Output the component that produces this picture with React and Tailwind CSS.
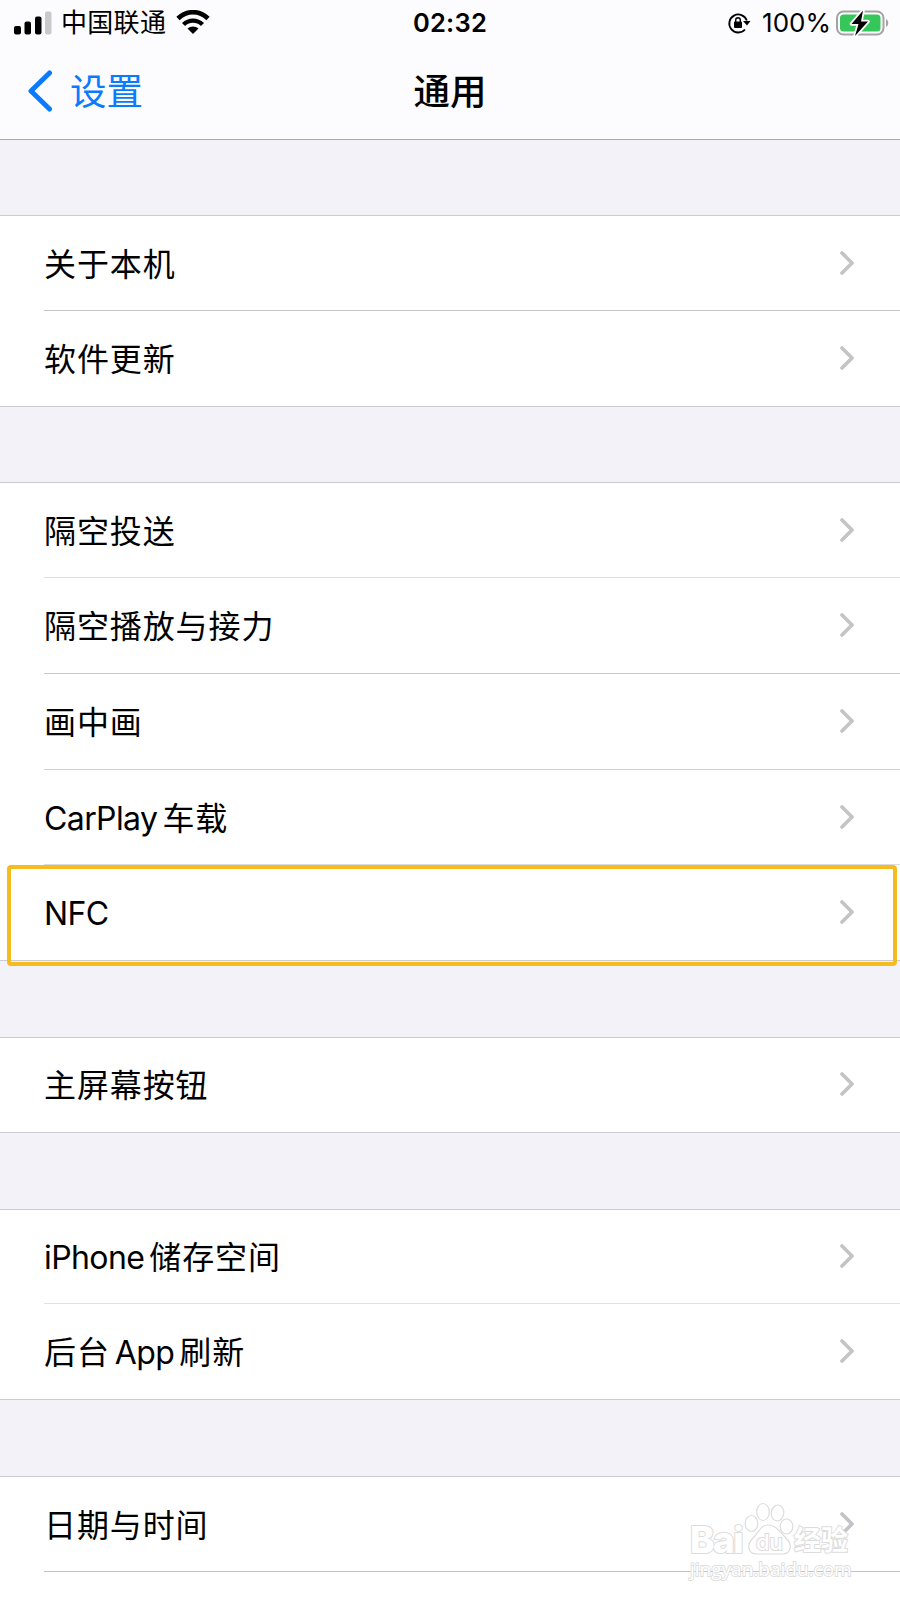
const groups = [
  {
    margin: "mt-[75px]",
    items: [
      { label: "关于本机", height: "h-[95px]", line: "bg-[#c4c4c8]" },
      { label: "软件更新", height: "h-[95px]" },
    ],
  },
  {
    margin: "mt-[75px]",
    items: [
      { label: "隔空投送", height: "h-[95px]", line: "bg-[#dedee0]" },
      { label: "隔空播放与接力", height: "h-[96px]", line: "bg-[#cacacd]" },
      { label: "画中画", height: "h-[96px]", line: "bg-[#d2d2d5]" },
      { label: "CarPlay 车载", height: "h-[95px]", line: "bg-[#dcdcde]" },
      { label: "NFC", height: "h-[95px]", selected: true },
    ],
  },
  {
    margin: "mt-[76px]",
    items: [{ label: "主屏幕按钮", height: "h-[94px]" }],
  },
  {
    margin: "mt-[76px]",
    items: [
      { label: "iPhone 储存空间", height: "h-[94px]", line: "bg-[#e2e2e4]" },
      { label: "后台 App 刷新", height: "h-[95px]" },
    ],
  },
  {
    margin: "mt-[76px]",
    items: [
      { label: "日期与时间", height: "h-[95px]", line: "bg-[#c4c4c8]" },
    ],
    last: true,
  },
];

function Signal() {
  return (
    <svg className="h-6 w-[38px]" viewBox="0 0 38 24">
      <rect x="0" y="15" width="7" height="8.5" rx="2" />
      <rect x="10.5" y="10.5" width="6.5" height="13" rx="2" />
      <rect x="21" y="5.5" width="6.5" height="18" rx="2" />
      <rect x="31" y="0.5" width="6.5" height="23" rx="2" fill="#c9c9cb" />
    </svg>
  );
}

function Wifi() {
  return (
    <svg className="h-6 w-[34px]" viewBox="0 0 34 24" fill="none" stroke="#000">
      <path d="M2 8.5C10.5 0 23.5 0 32 8.5" strokeWidth="4.6" />
      <path d="M7.5 14.5C13 9.3 21 9.3 26.5 14.5" strokeWidth="4.4" />
      <path d="M11.5 18.5C14.5 15.7 19.5 15.7 22.5 18.5L17 24Z" fill="#000" stroke="none" />
    </svg>
  );
}

function Lock() {
  return (
    <svg className="h-[22px] w-6" viewBox="0 0 24 22" fill="none" stroke="#000">
      <path d="M18 17.5A9 9 0 1 1 19.8 8.5" strokeWidth="1.8" />
      <path d="M16 9H23.5L20 13.5Z" fill="#000" stroke="none" />
      <rect x="7" y="9.5" width="8" height="6.5" rx="1" fill="#000" stroke="none" />
      <path d="M8.7 10V8a2.3 2.3 0 0 1 4.6 0v2" strokeWidth="1.4" />
    </svg>
  );
}

function Battery() {
  return (
    <svg className="h-[27px] w-[54px]" viewBox="0 0 54 27">
      <rect x="1" y="1.5" width="46.5" height="23" rx="6.5" fill="#fff" stroke="#a3a3a6" strokeWidth="2" />
      <rect x="4" y="4.5" width="40.5" height="17" rx="3.5" fill="#35c759" />
      <path d="M50 9c3 1.5 3 6.5 0 8Z" fill="#a3a3a6" />
      <path
        d="M27 0.5L15.5 14h7L19 26L32 11.5H25Z"
        stroke="#fff"
        strokeWidth="3.5"
        strokeLinejoin="round"
        paintOrder="stroke"
      />
    </svg>
  );
}

function Chevron() {
  return (
    <svg className="mb-[2px] h-6 w-[14px]" viewBox="0 0 14 24" fill="none">
      <path d="M2 2L12 12L2 22" stroke="#c4c4c6" strokeWidth="3.7" strokeLinecap="round" strokeLinejoin="round" />
    </svg>
  );
}

function Label({ text }) {
  return (
    <div className="mt-[2px] flex items-center gap-[5px] text-[32px] leading-none whitespace-nowrap">
      {text.split(" ").map((part) => (
        <span
          key={part}
          className={/[A-Za-z]/.test(part) ? "tracking-[-0.6px]" : "tracking-[0.9px]"}
        >
          {part}
        </span>
      ))}
    </div>
  );
}

function Row({ item }) {
  return (
    <div className={`relative flex items-center justify-between pl-11 pr-[46px] ${item.height}`}>
      <Label text={item.label} />
      <Chevron />
      {item.line && <div className={`absolute right-0 bottom-0 left-11 h-px ${item.line}`} />}
      {item.selected && (
        <div className="absolute top-0 right-[3px] -bottom-[6px] left-[7px] z-10 rounded-[4px] border-4 border-[#f5bc1f]" />
      )}
    </div>
  );
}

function Watermark() {
  return (
    <div className="absolute top-[1500px] left-[688px] h-[84px] w-[166px] text-white">
      <svg className="absolute top-0 left-0 h-[84px] w-[166px]" viewBox="0 0 166 84" fill="none" stroke="#dcdcdc" strokeWidth="1.2">
        <ellipse cx="63.5" cy="23.5" rx="6.3" ry="8" />
        <ellipse cx="75" cy="12" rx="6.3" ry="8.5" />
        <ellipse cx="89.5" cy="13" rx="6.3" ry="8" transform="rotate(8 89.5 13)" />
        <ellipse cx="98.5" cy="26.5" rx="6.3" ry="7.5" />
        <path d="M80 25c-8 0-9 8-15 13c-7 7-5 16 4 16h25c9 0 11-9 4-16c-6-5-9-13-18-13Z" />
      </svg>
      <span className="absolute top-[24px] left-[2px] text-[37px] leading-[32px] font-extrabold tracking-[-1.5px] [paint-order:stroke] [-webkit-text-stroke:2px_#dcdcdc]">
        Bai
      </span>
      <span className="absolute top-[29px] left-[68px] text-[22px] leading-[26px] font-medium [paint-order:stroke] [-webkit-text-stroke:2px_#dcdcdc]">
        du
      </span>
      <span className="absolute top-[26px] left-[106px] text-[27px] leading-[30px] font-bold [paint-order:stroke] [-webkit-text-stroke:2px_#dcdcdc]">
        经验
      </span>
      <span className="absolute top-[59px] left-[2px] font-['Open_Sans'] text-[19px] leading-[20px] [paint-order:stroke] [-webkit-text-stroke:1.8px_#dedede]">
        jingyan.baidu.com
      </span>
    </div>
  );
}

function App() {
  return (
    <div className="relative flex h-[1600px] w-[900px] flex-col overflow-hidden bg-[#f2f2f8] font-[Inter,'Noto_Sans_CJK_SC',sans-serif] text-black">
      <header className="h-[140px] border-b border-[#a8a8ad] bg-[#fcfcfe]">
        <div className="grid h-[46px] grid-cols-3 items-center">
          <div className="flex items-center pl-[14px]">
            <Signal />
            <span className="ml-[9px] text-[26px] leading-none tracking-[0.3px]">中国联通</span>
            <span className="mb-[2px] ml-[10px]">
              <Wifi />
            </span>
          </div>
          <div className="text-center text-[25.5px] leading-none font-semibold tracking-[0.2px]">02:32</div>
          <div className="flex items-center justify-end pr-[10px]">
            <Lock />
            <span className="mr-[5px] ml-[11px] text-[26px] leading-none">100%</span>
            <Battery />
          </div>
        </div>
        <div className="grid h-[92px] grid-cols-3 items-center">
          <div className="flex items-center pl-7 text-[#0a7aff]">
            <svg className="mb-[2px] h-[42px] w-6" viewBox="0 0 24 42" fill="none">
              <path d="M21.5 3L3 21L21.5 39" stroke="currentColor" strokeWidth="5" strokeLinecap="round" strokeLinejoin="round" />
            </svg>
            <span className="ml-[18px] text-[36.5px] leading-none">设置</span>
          </div>
          <div className="text-center text-[36.5px] leading-none font-medium">通用</div>
        </div>
      </header>
      <main className="flex flex-1 flex-col">
        {groups.map((group, i) => (
          <section
            key={i}
            className={`border-t border-[#cbcbd0] bg-white ${group.margin} ${group.last ? "flex-1" : "border-b"}`}
          >
            {group.items.map((item) => (
              <Row key={item.label} item={item} />
            ))}
          </section>
        ))}
      </main>
      <Watermark />
    </div>
  );
}

export default App;
